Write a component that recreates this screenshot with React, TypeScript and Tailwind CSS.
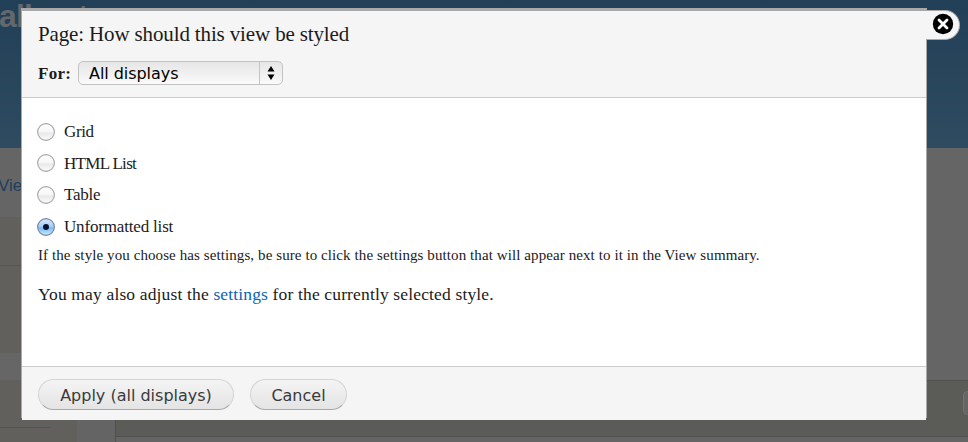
import { useState } from 'react';

const styles = [
  { name: 'Grid', text: 'tracking-[-0.4px]' },
  { name: 'HTML List', text: 'tracking-[-0.68px]' },
  { name: 'Table', text: 'tracking-[-0.25px]' },
  { name: 'Unformatted list', text: 'tracking-[-0.17px]' },
];

function Backdrop() {
  return (
    <div className="flex h-[442px] flex-col overflow-hidden bg-[#656565]">
      <div className="h-[148px] shrink-0 bg-gradient-to-b from-[#213f57] to-[#2e4b60]">
        <div className="-ml-px font-['Liberation_Sans',sans-serif] text-[32px] leading-[33px] font-bold tracking-tight text-[#62686c]">
          all out
        </div>
      </div>
      <div className="flex min-h-0 flex-1">
        <div className="flex w-[77px] flex-col">
          <div className="-ml-0.5 h-[69px] pt-[28px] font-['Liberation_Sans',sans-serif] text-[17px] leading-5 text-[#1f3f5c]">
            View
          </div>
          <div className="h-[49px] border-b border-[#575754] bg-[#61605d]" />
          <div className="h-[87px] bg-[#61605d]" />
          <div className="h-[27px] bg-[#666666]" />
          <div className="flex-1 bg-[#61605d] pt-[47px]">
            <div className="w-[51px] border-t border-[#535350]" />
          </div>
        </div>
        <div className="w-[38px] bg-[#646464]" />
        <div className="flex flex-1 flex-col border-l border-[#50504e]">
          <div className="h-[232px] bg-[#656565]" />
          <div className="flex h-[57px] justify-end border-y border-[#50504e] bg-[#5b5b58] pt-2.5">
            <div className="h-6 w-[5px] rounded-l-lg border border-r-0 border-[#727272] bg-[#656565]" />
          </div>
        </div>
      </div>
    </div>
  );
}

function Radio({ checked }: { checked: boolean }) {
  return (
    <svg width="18" height="18" viewBox="0 0 18 18">
      <defs>
        <linearGradient id="radio-off" x1="0" y1="0" x2="0" y2="1">
          <stop offset="0" stopColor="#ffffff" />
          <stop offset=".5" stopColor="#f6f6f6" />
          <stop offset=".55" stopColor="#e9e9e9" />
          <stop offset="1" stopColor="#fbfbfb" />
        </linearGradient>
        <linearGradient id="radio-on" x1="0" y1="0" x2="0" y2="1">
          <stop offset="0" stopColor="#d9ebfb" />
          <stop offset=".48" stopColor="#a3cdf6" />
          <stop offset=".55" stopColor="#7db8f2" />
          <stop offset="1" stopColor="#c8eeff" />
        </linearGradient>
      </defs>
      <circle cx="9" cy="9" r="8.4" fill={checked ? 'url(#radio-on)' : 'url(#radio-off)'} stroke={checked ? '#7684a0' : '#a6a6a6'} strokeWidth="1.1" />
      {checked && <circle cx="9" cy="9" r="3" fill="#07142c" />}
    </svg>
  );
}

function PillButton({ className, children }: { className: string; children: string }) {
  return (
    <button
      className={`h-[31px] rounded-full border border-[#d4d4d4] border-b-[#a9a9a9] bg-gradient-to-b from-[#f4f4f4] to-[#e4e4e4] pt-0.5 font-['DejaVu_Sans',sans-serif] text-base text-[#3a3a3a] ${className}`}
    >
      {children}
    </button>
  );
}

export default function App() {
  const [selected, setSelected] = useState('Unformatted list');

  return (
    <div className="relative h-[442px] w-[968px] overflow-hidden font-['Liberation_Serif',serif] text-[#1b1b1b]">
      <Backdrop />

      <div className="absolute top-2 left-[22px] flex h-[412px] w-[904px] flex-col border-t-[3px] border-[#a9a9a9] bg-white shadow-[-1px_-2px_0_#a9a9a9,1px_-2px_0_#a9a9a9] [clip-path:inset(0_-1px)]">
        <div className="h-[87px] border-b border-[#cccccc] bg-[#f5f5f5] px-4 pt-[11px]">
          <h1 className="text-[21px] leading-6 tracking-[-0.14px] whitespace-nowrap">
            <span>Page: How should this view be styled</span>
          </h1>
          <div className="mt-[15px] flex h-6 items-center">
            <label className="w-10 pt-0.5 text-[17px] leading-[22px] font-bold tracking-[0.25px]">For:</label>
            <div className="flex h-6 w-[205px] items-center rounded-[5px] border border-[#c3c3c3] bg-gradient-to-b from-[#e6e6e6] to-[#fafafa] font-['DejaVu_Sans',sans-serif] text-base text-black">
              <span className="flex-1 pt-0.5 pl-2.5 tracking-[-0.05px]">All displays</span>
              <span className="flex h-full w-[23px] items-center justify-center border-l border-[#c3c3c3]">
                <svg width="8" height="14" viewBox="0 0 8 14">
                  <path d="M4 0l3.5 5.5h-7zM4 14l3.5-5.5h-7z" fill="#000" />
                </svg>
              </span>
            </div>
          </div>
        </div>

        <div className="flex-1 px-4 pt-[18px]">
          {styles.map(({ name, text }) => (
            <div key={name} className="-ml-px flex h-[31.6px] cursor-pointer items-center" onClick={() => setSelected(name)}>
              <Radio checked={name === selected} />
              <span className={`pt-px pl-[9px] text-[17px] leading-6 whitespace-nowrap ${text}`}>{name}</span>
            </div>
          ))}
          <p className="mt-[3px] text-[15px] leading-5 tracking-[0.09px] whitespace-nowrap">
            <span>If the style you choose has settings, be sure to click the settings button that will appear next to it in the View summary.</span>
          </p>
          <p className="mt-[17px] text-[17.5px] leading-6 tracking-[0.15px] whitespace-nowrap">
            <span>
              You may also adjust the <a className="text-[#0a62b8]">settings</a> for the currently selected style.
            </span>
          </p>
        </div>

        <div className="flex h-[54px] gap-4 border-t border-[#cccccc] bg-[#f5f5f5] px-4 pt-3">
          <PillButton className="w-[196px]">Apply (all displays)</PillButton>
          <PillButton className="w-[97px]">Cancel</PillButton>
        </div>
      </div>

      <div className="absolute top-2.5 left-[926px] flex h-[30px] w-[34px] items-center rounded-r-full border border-l-0 border-[#a9a9a9] bg-[#f5f5f5] pb-0.5 pl-1.5">
        <svg width="22" height="22" viewBox="0 0 22 22">
          <circle cx="11" cy="11" r="10.2" fill="#000" />
          <path d="M7 7l8 8M15 7l-8 8" stroke="#fff" strokeWidth="2.8" strokeLinecap="round" />
        </svg>
      </div>
    </div>
  );
}
